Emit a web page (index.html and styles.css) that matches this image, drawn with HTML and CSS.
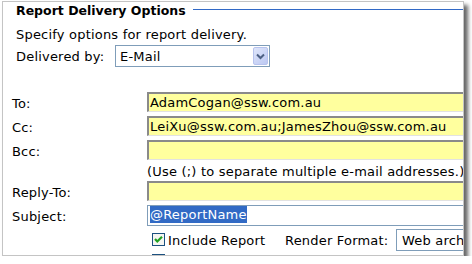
FILE: index.html
```html
<!DOCTYPE html>
<html lang="en">
  <head>
    <meta charset="UTF-8" />
    <meta name="viewport" content="width=device-width, initial-scale=1.0" />
    <title>Report Delivery Options</title>
    <link rel="stylesheet" href="styles.css">
  </head>
  <body>
    <div class="window">
      <div class="legend">
        <span class="legend-text">Report Delivery Options</span>
        <span class="legend-line"></span>
      </div>
      <p class="intro">Specify options for report delivery.</p>

      <div class="delivered">
        <span class="delivered-label">Delivered by:</span>
        <div class="select select-method">
          <span class="select-value">E-Mail</span>
          <span class="select-button">
            <svg width="13" height="16" viewBox="0 0 13 16">
              <path d="M3 6.5 L6.5 10 L10 6.5" fill="none" stroke="#4d6185" stroke-width="2" />
            </svg>
          </span>
        </div>
      </div>

      <!-- address fields -->
      <div class="fields">
        <div class="field">
          <span class="field-label">To:</span>
          <div class="input input-yellow">AdamCogan@ssw.com.au</div>
        </div>
        <div class="field">
          <span class="field-label">Cc:</span>
          <div class="input input-yellow">LeiXu@ssw.com.au;JamesZhou@ssw.com.au</div>
        </div>
        <div class="field">
          <span class="field-label">Bcc:</span>
          <div class="input input-yellow"></div>
        </div>
        <div class="field field-note">
          <span></span>
          <span class="note">(Use (;) to separate multiple e-mail addresses.)</span>
        </div>
        <div class="field">
          <span class="field-label">Reply-To:</span>
          <div class="input input-yellow"></div>
        </div>
        <div class="field">
          <span class="field-label">Subject:</span>
          <div class="input input-subject"><span class="selected">@ReportName</span></div>
        </div>
        <div class="field field-options">
          <span></span>
          <div class="options">
            <div class="check">
              <svg class="checkbox" width="13" height="13" viewBox="0 0 13 13">
                <rect x="0.5" y="0.5" width="12" height="12" fill="#f6f6f2" stroke="#1c5180" />
                <path d="M3 6 L5.3 8.5 L10 3.8" fill="none" stroke="#21a121" stroke-width="2.2" />
              </svg>
              <span>Include Report</span>
            </div>
            <span class="render-label">Render Format:</span>
            <div class="select select-format">
              <span class="select-value">Web archive</span>
            </div>
          </div>
        </div>
        <div class="field field-next">
          <span></span>
          <div class="check">
            <svg class="checkbox" width="13" height="13" viewBox="0 0 13 13">
              <rect x="0.5" y="0.5" width="12" height="12" fill="#f6f6f2" stroke="#1c5180" />
            </svg>
          </div>
        </div>
      </div>
    </div>
  </body>
</html>
```

FILE: styles.css
```css
* {
  margin: 0;
  padding: 0;
  box-sizing: border-box;
}

body {
  background: #fff;
  font-family: 'DejaVu Sans', Verdana, sans-serif;
  font-size: 13px;
  line-height: 16px;
  letter-spacing: 0.2px;
  color: #000;
}

.window {
  margin: 1px 0 0 2px;
  width: 462px;
  height: 255px;
  border: 1px solid #c4c4c4;
  background: #fff;
  box-shadow: 4px 4px 4px rgba(0, 0, 0, 0.6);
  overflow: hidden;
  white-space: nowrap;
}

.legend {
  display: flex;
  margin-top: 1px;
  padding-left: 13px;
}

.legend-text {
  font-weight: bold;
  font-size: 12.5px;
  letter-spacing: 0;
}

.legend-line {
  flex: 1;
  height: 1px;
  background: #3169c6;
  margin: 6px 0 0 7px;
}

.intro {
  margin-top: 8px;
  padding-left: 13px;
}

.delivered {
  display: flex;
  align-items: center;
  margin-top: 2px;
  padding-left: 13px;
}

.delivered-label {
  width: 99px;
  padding-top: 1px;
}

.select {
  display: flex;
  flex: none;
  align-items: center;
  height: 22px;
  border: 1px solid #7f9db9;
  background: #fff;
}

.select-method {
  width: 155px;
  padding: 1px 1px 1px 4px;
}

.select-value {
  flex: 1;
  padding-top: 1px;
}

.select-button {
  display: flex;
  align-items: center;
  justify-content: center;
  width: 15px;
  height: 18px;
  border: 1px solid #b7c3ee;
  border-radius: 2px;
  background: linear-gradient(135deg, #dfe6fb, #bcc8f2);
}

.fields {
  margin-top: 23px;
  padding-left: 9px;
}

.field {
  display: grid;
  grid-template-columns: 135px 360px;
  align-items: start;
  height: 24px;
}

.field-label {
  padding-top: 6px;
}

.input {
  margin-top: 2px;
  height: 20px;
  padding: 1px 1px 0 1px;
}

.input-yellow {
  background: #ffff9e;
  border-style: solid;
  border-width: 2px 1px 1px 2px;
  border-color: #8a8a8a #e2e2e2 #e2e2e2 #8a8a8a;
}

.field-note {
  height: 17px;
}

.note {
  padding-top: 2px;
}

.input-subject {
  height: 21px;
  padding: 0 2px;
  border: 1px solid #7f9db9;
  background: #fff;
}

.selected {
  display: inline-block;
  line-height: 17px;
  background: #316ac5;
  color: #fff;
}

.options {
  display: flex;
  align-items: flex-start;
  margin-top: 2px;
}

.check {
  display: flex;
  flex: none;
  align-items: flex-start;
  width: 138px;
  padding: 4px 0 0 5px;
}

.checkbox {
  flex: none;
  margin-right: 3px;
}

.render-label {
  flex: none;
  width: 111px;
  padding-top: 4px;
}

.select-format {
  width: 140px;
  padding-left: 5px;
}

.field-next .check {
  padding-top: 3px;
}
```
